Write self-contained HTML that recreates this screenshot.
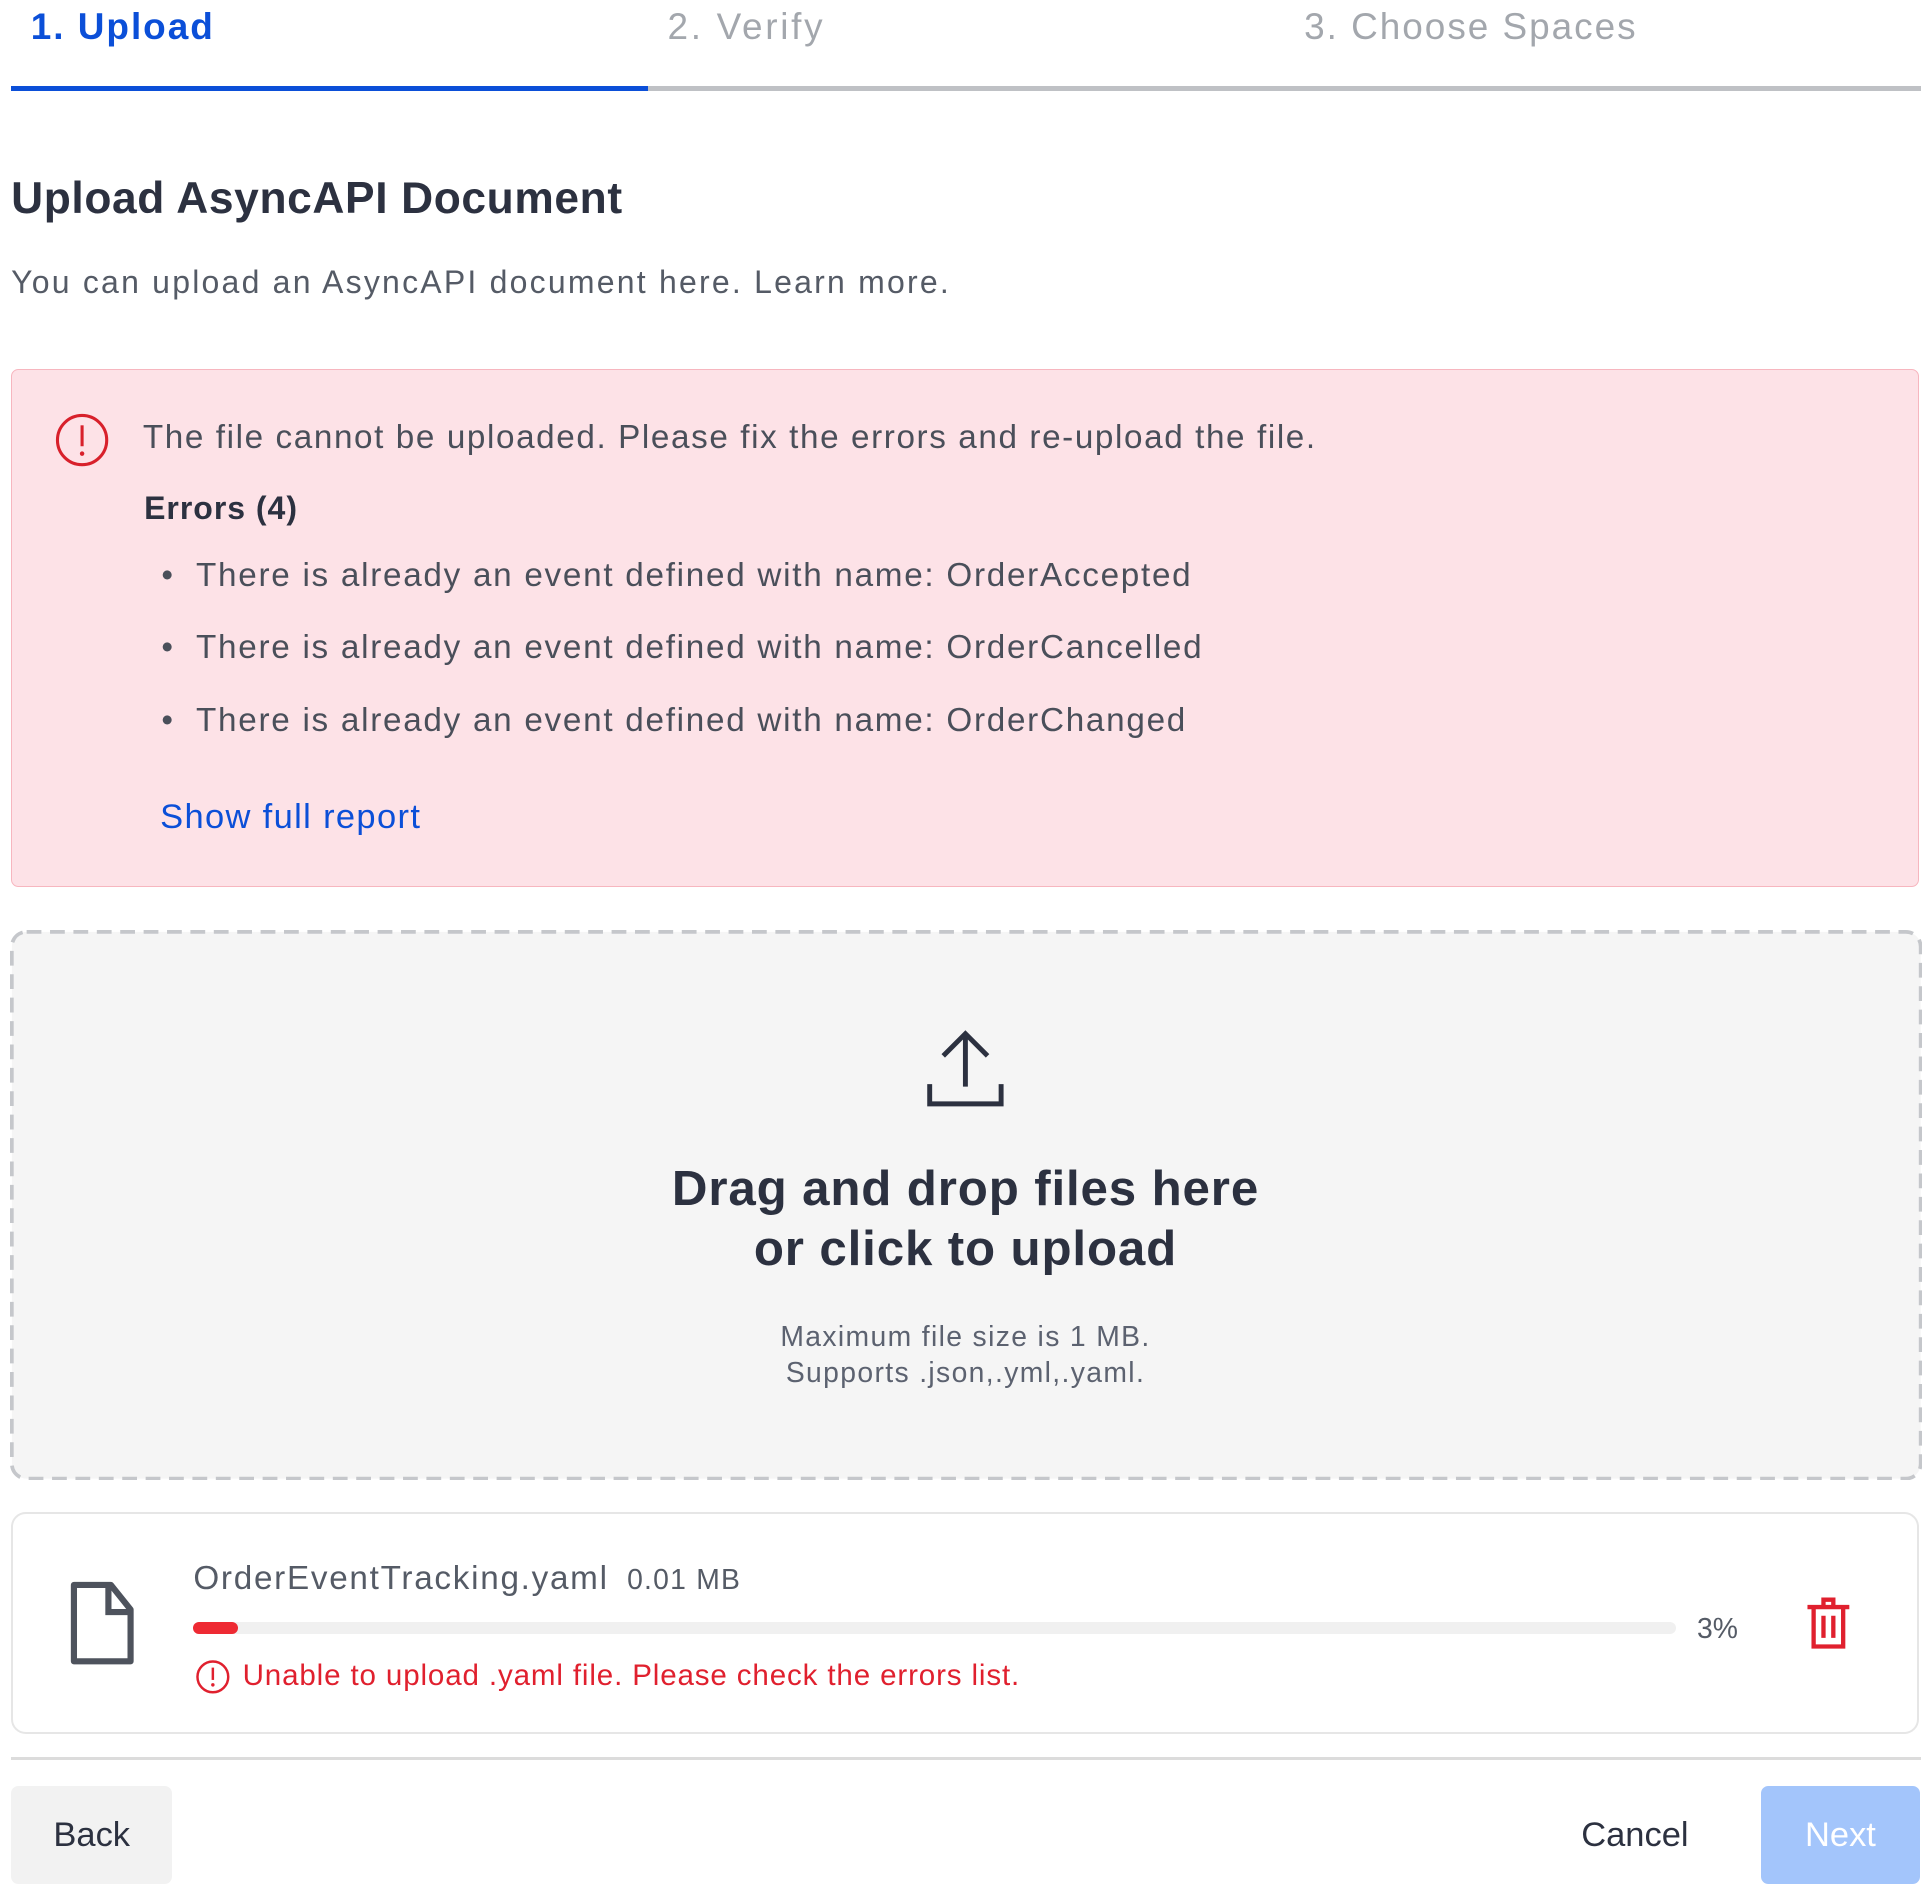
<!DOCTYPE html>
<html><head><meta charset="utf-8"><style>
html,body{margin:0;padding:0;background:#fff;width:1931px;height:1895px;overflow:hidden}
#w{zoom:1.2315;width:1568px;height:1539px;position:relative;font-family:"Liberation Sans",sans-serif;color:#4a4f5a}
.a{position:absolute;white-space:nowrap}
.tab{font-size:30px;top:5px;letter-spacing:1.6px}
</style></head><body><div id="w">
<div class="a tab" style="left:25px;color:#0b4fd8;font-weight:600">1. Upload</div>
<div class="a tab" style="left:542px;color:#a3a7ad;letter-spacing:2.2px">2. Verify</div>
<div class="a tab" style="left:1059px;color:#a3a7ad">3. Choose Spaces</div>
<div class="a" style="left:526px;top:70px;width:1034px;height:4px;background:#bfc1c5"></div>
<div class="a" style="left:9px;top:70px;width:517px;height:4px;background:#0b4fd8"></div>

<div class="a" style="left:9px;top:141px;font-size:36px;font-weight:600;color:#2c3140;letter-spacing:0.5px">Upload AsyncAPI Document</div>
<div class="a" style="left:9px;top:214px;font-size:26px;color:#555b66;letter-spacing:1.8px">You can upload an AsyncAPI document here. Learn more.</div>

<div class="a" style="left:9px;top:300px;width:1548px;height:419px;background:#fde2e7;border:1px solid #f7b6bf;border-radius:6px"></div>
<svg class="a" style="left:45px;top:335px" width="44" height="44" viewBox="0 0 44 44"><circle cx="22" cy="22" r="20" fill="none" stroke="#d8202b" stroke-width="2.5"/><line x1="22" y1="10" x2="22" y2="27" stroke="#d8202b" stroke-width="2.5"/><circle cx="22" cy="33" r="1.8" fill="#d8202b"/></svg>
<div class="a" style="left:116px;top:340px;font-size:27px;letter-spacing:1.3px">The file cannot be uploaded. Please fix the errors and re-upload the file.</div>
<div class="a" style="left:117px;top:398px;font-size:26px;font-weight:600;color:#2c3140;letter-spacing:0.8px">Errors (4)</div>
<div class="a" style="left:131px;top:452px;font-size:27px;letter-spacing:1.4px">•&nbsp; There is already an event defined with name: OrderAccepted</div>
<div class="a" style="left:131px;top:511px;font-size:27px;letter-spacing:1.4px">•&nbsp; There is already an event defined with name: OrderCancelled</div>
<div class="a" style="left:131px;top:570px;font-size:27px;letter-spacing:1.4px">•&nbsp; There is already an event defined with name: OrderChanged</div>
<div class="a" style="left:130px;top:648px;font-size:28px;color:#0b4fd8;letter-spacing:1.1px">Show full report</div>

<svg class="a" style="left:8px;top:755px" width="1553" height="447"><rect x="1.5" y="1.5" width="1550" height="444" rx="12" fill="#f5f5f5" stroke="#c5c7cb" stroke-width="3" stroke-dasharray="12 7"/></svg>
<svg class="a" style="left:752px;top:836px" width="64" height="64" viewBox="0 0 64 64"><path d="M32 4V46M14 21L32 3L50 21" fill="none" stroke="#2c3140" stroke-width="4"/><path d="M3 44V60H61V44" fill="none" stroke="#2c3140" stroke-width="4"/></svg>
<div class="a" style="left:0;width:1568px;text-align:center;top:941px;font-size:40px;font-weight:600;color:#2c3140;line-height:49px;letter-spacing:0.7px">Drag and drop files here<br>or click to upload</div>
<div class="a" style="left:0;width:1568px;text-align:center;top:1072px;font-size:23px;color:#5c6270;line-height:29px;letter-spacing:1.1px">Maximum file size is 1 MB.<br>Supports .json,.yml,.yaml.</div>

<div class="a" style="left:9px;top:1228px;width:1546px;height:177px;border:2px solid #e6e6e6;border-radius:12px"></div>
<svg class="a" style="left:56px;top:1283px" width="54" height="70" viewBox="0 0 54 70"><path d="M4 4H34L50 24V66H4Z" fill="none" stroke="#4e535d" stroke-width="5" stroke-linejoin="round"/><path d="M32 4V26H50" fill="none" stroke="#4e535d" stroke-width="5"/></svg>
<div class="a" style="left:157px;top:1267px;font-size:27px;color:#555b66;letter-spacing:1.4px">OrderEventTracking.yaml <span style="font-size:23px;margin-left:6px;letter-spacing:1px">0.01 MB</span></div>
<div class="a" style="left:157px;top:1317px;width:1204px;height:10px;background:#f0f0f0;border-radius:5px"></div>
<div class="a" style="left:157px;top:1317px;width:36px;height:10px;background:#ee2a33;border-radius:5px"></div>
<div class="a" style="left:1378px;top:1310px;font-size:23px;color:#555b66">3%</div>
<svg class="a" style="left:1466px;top:1296px" width="38" height="44" viewBox="0 0 38 44"><path d="M2 9H36M15 9V3H23V9M7 9V41H31V9M15 16V34M23 16V34" fill="none" stroke="#e0202e" stroke-width="3.5"/></svg>
<svg class="a" style="left:158px;top:1347px" width="29" height="29" viewBox="0 0 29 29"><circle cx="14.5" cy="14.5" r="12.5" fill="none" stroke="#e0202e" stroke-width="2"/><line x1="14.5" y1="7" x2="14.5" y2="17" stroke="#e0202e" stroke-width="2"/><circle cx="14.5" cy="21" r="1.4" fill="#e0202e"/></svg>
<div class="a" style="left:197px;top:1347px;font-size:24px;color:#e0202e;letter-spacing:0.7px">Unable to upload .yaml file. Please check the errors list.</div>

<div class="a" style="left:9px;top:1427px;width:1551px;height:2px;background:#dcdcdc"></div>
<div class="a" style="left:9px;top:1450px;width:131px;height:80px;background:#f2f2f2;border-radius:6px;font-size:28px;color:#2c3140;line-height:80px;text-align:center">Back</div>
<div class="a" style="left:1284px;top:1475px;font-size:28px;color:#2c3140">Cancel</div>
<div class="a" style="left:1430px;top:1450px;width:129px;height:80px;background:#a3c5fb;border-radius:6px;font-size:28px;color:#fff;line-height:80px;text-align:center">Next</div>
</div></body></html>
